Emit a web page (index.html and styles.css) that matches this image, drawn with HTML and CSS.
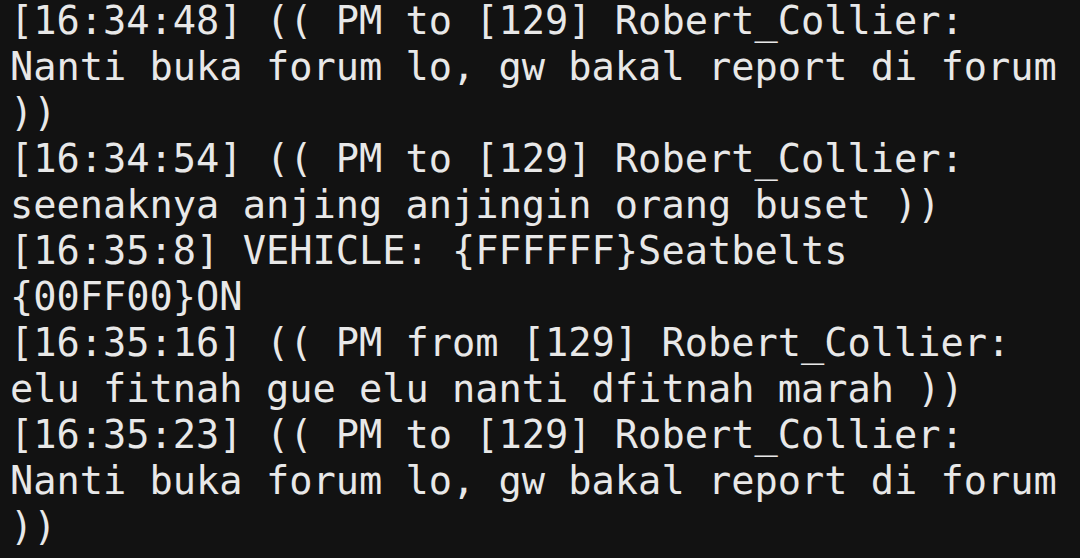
FILE: index.html
```html
<!DOCTYPE html>
<html>
<head>
<meta charset="utf-8">
<link rel="stylesheet" href="styles.css">
</head>
<body>
<div class="log">
  <div class="line">[16:34:48] (( PM to [129] Robert_Collier:</div>
  <div class="line">Nanti buka forum lo, gw bakal report di forum</div>
  <div class="line">))</div>
  <div class="line">[16:34:54] (( PM to [129] Robert_Collier:</div>
  <div class="line">seenaknya anjing anjingin orang buset ))</div>
  <div class="line">[16:35:8] VEHICLE: {FFFFFF}Seatbelts</div>
  <div class="line">{00FF00}ON</div>
  <div class="line">[16:35:16] (( PM from [129] Robert_Collier:</div>
  <div class="line">elu fitnah gue elu nanti dfitnah marah ))</div>
  <div class="line">[16:35:23] (( PM to [129] Robert_Collier:</div>
  <div class="line">Nanti buka forum lo, gw bakal report di forum</div>
  <div class="line">))</div>
</div>
</body>
</html>
```
FILE: styles.css
```css
html, body {
  margin: 0;
  padding: 0;
  background: #121212;
  width: 1080px;
  height: 558px;
  overflow: hidden;
}
.log {
  margin-top: -2px;
  padding: 0 0 0 10px;
  display: flex;
  flex-direction: column;
  font-family: "DejaVu Sans Mono", "Liberation Mono", monospace;
  font-size: 38.65px;
  line-height: 46px;
  color: #e8e8e8;
}
.line {
  white-space: pre;
}
```
